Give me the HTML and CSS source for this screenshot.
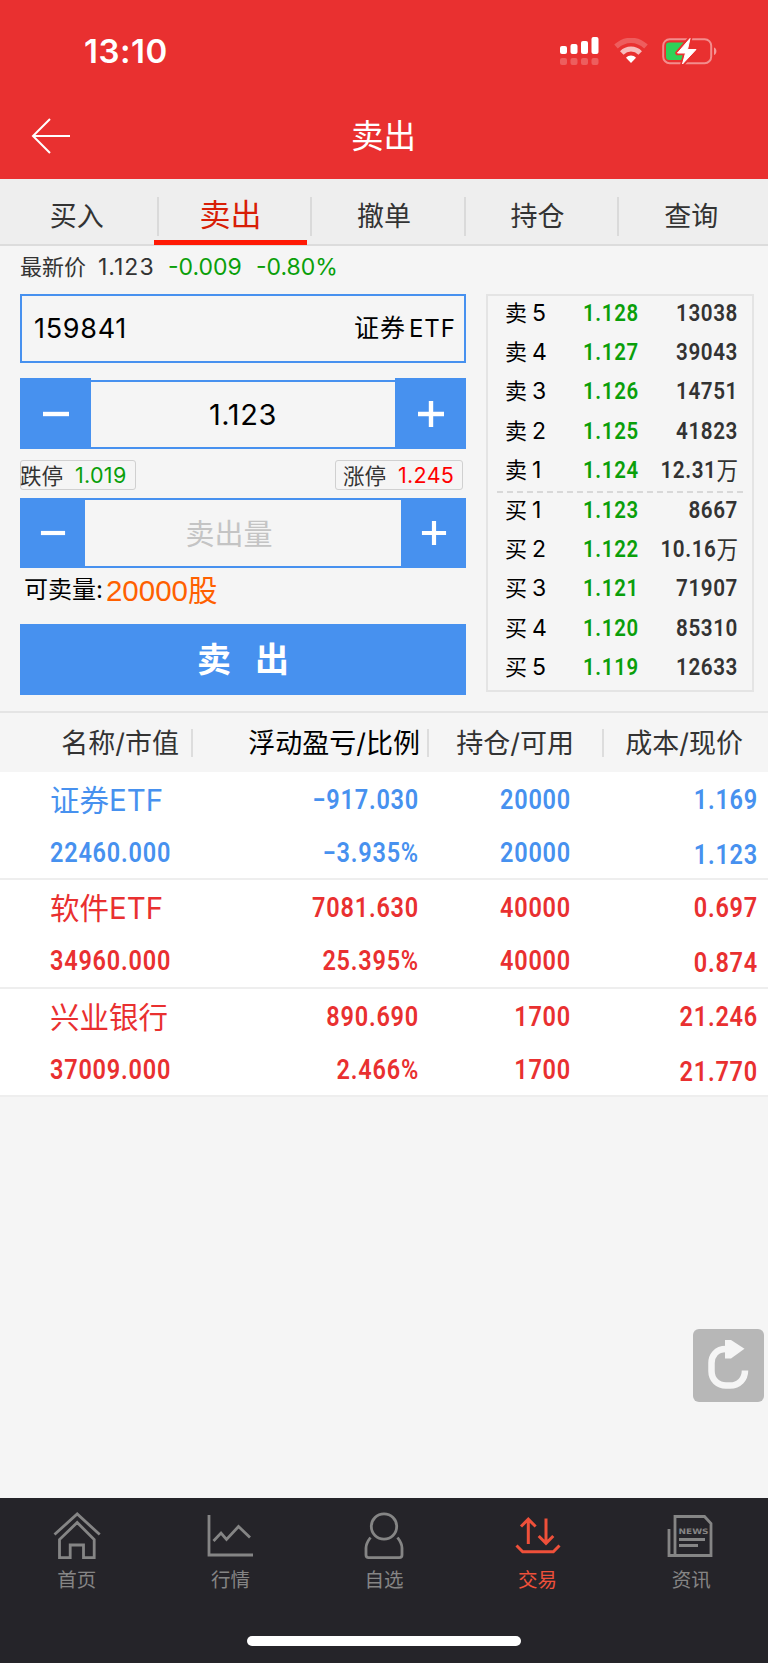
FILE: index.html
```html
<!DOCTYPE html>
<html lang="zh-CN">
<head>
    <meta charset="UTF-8">
    <meta name="viewport" content="width=device-width, initial-scale=1.0">
    <title>卖出</title>
    <link rel="stylesheet" href="styles.css">
</head>
<body>
    <div class="page">
        <div class="header">
            <div class="status">
                <span class="time">13:10</span>
                <div class="status-icons">
                    <svg class="signal" width="40" height="28" viewBox="0 0 40 28" fill="#fff">
                        <rect x="0" y="9" width="7" height="8" rx="2"/>
                        <rect x="10.5" y="7" width="7" height="10" rx="2"/>
                        <rect x="21" y="4" width="7" height="13" rx="2"/>
                        <rect x="31.5" y="0" width="7" height="17" rx="2"/>
                        <g opacity=".22">
                            <rect x="0" y="21" width="7" height="7" rx="2"/>
                            <rect x="10.5" y="21" width="7" height="7" rx="2"/>
                            <rect x="21" y="21" width="7" height="7" rx="2"/>
                            <rect x="31.5" y="21" width="7" height="7" rx="2"/>
                        </g>
                    </svg>
                    <svg class="wifi" width="34" height="26" viewBox="0 0 34 26" fill="none">
                        <path d="M2 8.5C11 .2 23 .2 32 8.5" stroke="#fff" stroke-width="5.2" opacity=".22"/>
                        <path d="M7.8 15c5.2-5.2 13.2-5.2 18.4 0" stroke="#fff" stroke-width="5" opacity=".68"/>
                        <path d="M17 25l-5-5.2c2.8-3 7.2-3 10 0z" fill="#fff"/>
                    </svg>
                    <svg class="battery" width="56" height="28" viewBox="0 0 56 28">
                        <rect x="1.2" y="2.2" width="48" height="24" rx="6.5" fill="none" stroke="#fff" stroke-width="2" opacity=".45"/>
                        <path d="M52 10.5c3.2 1 3.2 6.5 0 7.5z" fill="#fff" opacity=".5"/>
                        <path d="M7 5.5h15v17.5H7a3 3 0 0 1-3-3v-11.5a3 3 0 0 1 3-3z" fill="#30d158"/>
                        <path d="M28 1.5L15.5 16h8L20.5 27 34 12.5h-8.5z" fill="#fff" stroke="#e93030" stroke-width="4.5" stroke-linejoin="round"/>
                        <path d="M28 1.5L15.5 16h8L20.5 27 34 12.5h-8.5z" fill="#fff" stroke="#fff" stroke-width="1"/>
                    </svg>
                </div>
            </div>
            <div class="title-bar">
                <svg class="back" width="40" height="36" viewBox="0 0 40 36" fill="none" stroke="#fff" stroke-width="2">
                    <path d="M20 1L3 18l17 17M3 18h37"/>
                </svg>
                <h1>卖出</h1>
            </div>
        </div>

        <ul class="tabs">
            <li>买入</li>
            <li class="active">卖出</li>
            <li>撤单</li>
            <li>持仓</li>
            <li>查询</li>
        </ul>

        <div class="quote">
            <span class="quote-name">最新价</span>
            <span class="quote-price">1.123</span>
            <span class="quote-diff green">-0.009</span>
            <span class="quote-rate green">-0.80%</span>
        </div>

        <div class="trade">
            <div class="form">
                <div class="code-box">
                    <span class="code">159841</span>
                    <span class="stock"><span class="stock-cn">证券</span>ETF</span>
                </div>
                <div class="stepper price">
                    <div class="step-btn"><svg width="28" height="28" viewBox="0 0 28 28" stroke="#fff" stroke-width="4.4"><path d="M1 14h26"/></svg></div>
                    <div class="step-value">1.123</div>
                    <div class="step-btn"><svg width="28" height="28" viewBox="0 0 28 28" stroke="#fff" stroke-width="4.4"><path d="M1 14h26M14 1v26"/></svg></div>
                </div>
                <div class="limits">
                    <div class="limit down"><label>跌停</label><span class="green">1.019</span></div>
                    <div class="limit up"><label>涨停</label><span class="red">1.245</span></div>
                </div>
                <div class="stepper amount">
                    <div class="step-btn"><svg width="26" height="26" viewBox="0 0 28 28" stroke="#fff" stroke-width="4.5"><path d="M1 14h26"/></svg></div>
                    <div class="step-value placeholder">卖出量</div>
                    <div class="step-btn"><svg width="26" height="26" viewBox="0 0 28 28" stroke="#fff" stroke-width="4.5"><path d="M1 14h26M14 1v26"/></svg></div>
                </div>
                <div class="available">可卖量:<span>20000股</span></div>
                <div class="sell-btn">卖<i></i>出</div>
            </div>

            <div class="book">
                <ul>
                    <li><b>卖<em>5</em></b><span>1.128</span><strong>13038</strong></li>
                    <li><b>卖<em>4</em></b><span>1.127</span><strong>39043</strong></li>
                    <li><b>卖<em>3</em></b><span>1.126</span><strong>14751</strong></li>
                    <li><b>卖<em>2</em></b><span>1.125</span><strong>41823</strong></li>
                    <li><b>卖<em>1</em></b><span>1.124</span><strong>12.31<i>万</i></strong></li>
                </ul>
                <ul class="buy">
                    <li><b>买<em>1</em></b><span>1.123</span><strong>8667</strong></li>
                    <li><b>买<em>2</em></b><span>1.122</span><strong>10.16<i>万</i></strong></li>
                    <li><b>买<em>3</em></b><span>1.121</span><strong>71907</strong></li>
                    <li><b>买<em>4</em></b><span>1.120</span><strong>85310</strong></li>
                    <li><b>买<em>5</em></b><span>1.119</span><strong>12633</strong></li>
                </ul>
            </div>
        </div>

        <div class="holdings">
            <div class="holdings-head">
                <div>名称/市值</div>
                <div class="dark">浮动盈亏/比例</div>
                <div>持仓/可用</div>
                <div>成本/现价</div>
            </div>
            <div class="holding blue">
                <div><p class="name">证券ETF</p><p>22460.000</p></div>
                <div><p>−917.030</p><p>−3.935%</p></div>
                <div><p>20000</p><p>20000</p></div>
                <div><p>1.169</p><p>1.123</p></div>
            </div>
            <div class="holding">
                <div><p class="name">软件ETF</p><p>34960.000</p></div>
                <div><p>7081.630</p><p>25.395%</p></div>
                <div><p>40000</p><p>40000</p></div>
                <div><p>0.697</p><p>0.874</p></div>
            </div>
            <div class="holding">
                <div><p class="name">兴业银行</p><p>37009.000</p></div>
                <div><p>890.690</p><p>2.466%</p></div>
                <div><p>1700</p><p>1700</p></div>
                <div><p>21.246</p><p>21.770</p></div>
            </div>
        </div>

        <div class="refresh">
            <svg width="71" height="73" viewBox="0 0 71 73">
                <path d="M33 20C23 20 18.5 27 18.5 34v8C18.5 51 25 56.5 33 56.5h4C46 56.5 52 50 52 41.500" fill="none" stroke="#f5f5f5" stroke-width="6.5"/>
                <path d="M32 11h6l13.5 8.8L38 29.5h-6z" fill="#f5f5f5"/>
            </svg>
        </div>

        <div class="nav">
            <ul>
                <li>
                    <svg width="50" height="50" viewBox="0 0 50 50" fill="none" stroke="#858585" stroke-width="2.8">
                        <path d="M2.5 23.5L25.2 3l22.5 20.5"/>
                        <path d="M7.5 28.5v18.2h10.7V34h13.3v12.7h10.7V28.5l-17-17z"/>
                    </svg>
                    <span>首页</span>
                </li>
                <li>
                    <svg width="50" height="50" viewBox="0 0 50 50" fill="none" stroke="#858585" stroke-width="2.8">
                        <path d="M4 4v40h44"/>
                        <path d="M8.5 30l7.5-8 5.5 6.5L33.5 15.500l11.500 11"/>
                    </svg>
                    <span>行情</span>
                </li>
                <li>
                    <svg width="50" height="50" viewBox="0 0 50 50" fill="none" stroke="#858585" stroke-width="2.8">
                        <circle cx="25" cy="15.5" r="12.7"/>
                        <path d="M11.5 26.5C8 31 7 33 7 37v7q0 2.700 2.700 2.700h30.600q2.700 0 2.700-2.700v-7c0-4-1-6-4.500-10.500"/>
                    </svg>
                    <span>自选</span>
                </li>
                <li class="active">
                    <svg width="50" height="50" viewBox="1 0 50 50" fill="none" stroke="#ef503a" stroke-width="3">
                        <path d="M16.300 33V8.500M9 15.500l7.300-7.300 7.300 7.300"/>
                        <path d="M34 7.500V32M26.700 25l7.300 7.300 7.300-7.300"/>
                        <path d="M4.500 34.500l6.200 6.200h30.600l6.200-6.200"/>
                    </svg>
                    <span>交易</span>
                </li>
                <li>
                    <svg width="50" height="50" viewBox="1 0 50 50" fill="none" stroke="#858585" stroke-width="2.8">
                        <path d="M10 44.500V5.500H39.500l6.500 7v32H4V18"/>
                        <path d="M14 28.500h26M14 34.500h19"/>
                        <text x="13.500" y="22.500" font-family="DejaVu Sans" font-weight="bold" font-size="7.5" textLength="30" lengthAdjust="spacingAndGlyphs" fill="#858585" stroke="none">NEWS</text>
                    </svg>
                    <span>资讯</span>
                </li>
            </ul>
            <div class="home-bar"></div>
        </div>
    </div>
</body>
</html>
```
FILE: styles.css
```css
*{
    padding: 0;
    margin: 0;
    box-sizing: border-box;
}
li{
    list-style: none;
}
i,em{
    font-style: normal;
}
body{
    background-color: #f5f5f5;
    font-family: Inter, "Noto Sans CJK SC", sans-serif;
    color: #333;
}
.page{
    width: 768px;
    height: 1663px;
    display: flex;
    flex-direction: column;
    position: relative;
    overflow: hidden;
    white-space: nowrap;
}
.green{
    color: #0a9f0a;
}
.red{
    color: #f00;
}

/* 顶部 */
.header{
    height: 179px;
    background-color: #e93030;
    color: #fff;
}
.status{
    height: 94px;
    padding: 8px 50px 0 84px;
    display: flex;
    justify-content: space-between;
    align-items: center;
}
.time{
    font-size: 33px;
    font-weight: 600;
    letter-spacing: 0.5px;
}
.status-icons{
    display: flex;
    align-items: center;
}
.wifi{
    margin: 0 14px 0 14px;
}
.title-bar{
    height: 84px;
    padding: 0 30px;
    display: flex;
    align-items: center;
}
.title-bar h1{
    flex: 1;
    padding: 0 41px 5px 0;
    text-align: center;
    font-size: 32.5px;
    font-weight: 400;
}

/* 菜单 */
.tabs{
    height: 67px;
    display: flex;
    background-color: #eee;
    border-bottom: 2px solid #dcdcdc;
}
.tabs li{
    flex: 1;
    height: 66px;
    line-height: 75px;
    text-align: center;
    font-size: 27px;
    position: relative;
}
.tabs li+li::before{
    content: "";
    position: absolute;
    left: 3px;
    top: 18px;
    width: 2px;
    height: 39px;
    background-color: #dadada;
}
.tabs .active{
    color: #d81e06;
    font-size: 31px;
    line-height: 72px;
    border-bottom: 5px solid #ff1a05;
}
.quote{
    height: 48px;
    padding: 0 0 7px 20px;
    display: flex;
    align-items: center;
    font-size: 23px;
}
.quote-name{
    width: 78px;
    padding-bottom: 4px;
    font-size: 22px;
}
.quote-price{
    width: 70px;
    letter-spacing: 1px;
}
.quote-diff{
    width: 88px;
}

/* 下单 */
.trade{
    height: 417px;
    padding: 0 14px 0 20px;
    display: flex;
    justify-content: space-between;
    align-items: flex-start;
}
.form{
    width: 446px;
    color: #000;
}
.code-box{
    height: 69px;
    padding: 0 8px 0 12px;
    display: flex;
    justify-content: space-between;
    align-items: center;
    border: 2px solid #4791ef;
}
.code{
    font-size: 27px;
    letter-spacing: 0.7px;
}
.stock{
    padding-bottom: 5px;
    font-size: 24px;
    letter-spacing: 1px;
}
.stock-cn{
    font-size: 25px;
    margin-right: 3px;
}
.stepper{
    display: flex;
    justify-content: space-between;
}
.step-btn{
    background-color: #4791ef;
    display: flex;
    justify-content: center;
    align-items: center;
}
.step-value{
    flex: 1;
    display: flex;
    justify-content: center;
    align-items: center;
    font-size: 29px;
    letter-spacing: 0.6px;
    border-top: 2px solid #4791ef;
    border-bottom: 2px solid #4791ef;
}
.price{
    height: 71px;
    margin-top: 15px;
}
.price .step-btn{
    width: 71px;
}
.price .step-value{
    margin-top: 2px;
}
.limits{
    height: 30px;
    margin: 11px 3px 8px 0;
    display: flex;
    justify-content: space-between;
}
.limit{
    display: flex;
    align-items: center;
    border: 1px solid #d0d0d0;
    border-radius: 3px;
    font-size: 21.5px;
    color: #333;
}
.limit label{
    padding-bottom: 2px;
    margin-left: -1px;
}
.limit span{
    margin-left: 12px;
    letter-spacing: 0.3px;
}
.down{
    width: 116px;
}
.up{
    width: 128px;
    padding-left: 8px;
}
.amount{
    height: 70px;
}
.amount .step-btn{
    width: 65px;
}
.amount .placeholder{
    padding: 0 28px 3px 0;
    letter-spacing: 0;
    color: #c4c4c4;
}
.available{
    height: 44px;
    padding: 0 0 5px 4px;
    display: flex;
    align-items: center;
    font-size: 24px;
}
.available span{
    margin-left: 3px;
    font-family: "Liberation Sans", "Noto Sans CJK SC", sans-serif;
    font-size: 29.5px;
    color: #ff6000;
}
.sell-btn{
    height: 71px;
    margin-top: 12px;
    line-height: 71px;
    text-align: center;
    background-color: #4791ef;
    color: #fff;
    font-size: 34px;
    font-weight: 700;
}
.sell-btn i{
    display: inline-block;
    width: 24px;
}

/* 五档 */
.book{
    width: 268px;
    height: 398px;
    padding: 0 9px;
    border: 2px solid #e4e4e4;
}
.book ul{
    height: 197px;
}
.book li{
    height: 39.4px;
    padding: 0 5px 0 8px;
    display: flex;
    align-items: center;
    font-family: Roboto, "Noto Sans CJK SC", sans-serif;
    font-size: 24px;
    font-weight: 600;
    position: relative;
    top: -3px;
}
.book b{
    width: 78px;
    height: 38px;
    line-height: 38px;
    font-family: Inter, "Noto Sans CJK SC", sans-serif;
    font-size: 22px;
    font-weight: 400;
    color: #000;
}
.book em{
    margin-left: 5px;
    font-size: 23px;
}
/* 数字压窄 */
.book span{
    width: 54px;
    color: #0a9f0a;
    letter-spacing: 0.8px;
    transform: scaleX(0.85);
    transform-origin: left;
}
.book strong{
    flex: 1;
    display: flex;
    justify-content: flex-end;
    align-items: center;
    height: 38px;
    font-weight: 600;
    letter-spacing: 0.7px;
    transform: scaleX(0.86);
    transform-origin: right;
}
.book strong i{
    padding-bottom: 3px;
    font-size: 25px;
    font-weight: 400;
    letter-spacing: 0;
}
.buy{
    border-top: 2px dashed #d8d8d8;
}
.book ul:first-child{
    height: 195px;
}

/* 持仓 */
.holdings-head{
    height: 61px;
    display: flex;
    align-items: center;
    border-top: 2px solid #e4e4e4;
    font-size: 27px;
}
.holdings-head div{
    height: 28px;
    line-height: 29px;
    border-right: 2px solid #ddd;
    text-align: right;
}
.holdings-head div:nth-child(1){
    width: 193px;
    padding-right: 12px;
}
.holdings-head div:nth-child(2){
    width: 236px;
    padding-right: 7px;
}
.holdings-head div:nth-child(3){
    width: 175px;
    padding-right: 28px;
}
.holdings-head div:nth-child(4){
    width: 139px;
    border: 0;
}
.holdings-head .dark{
    color: #000;
}
.holding{
    height: 108.3px;
    display: flex;
    background-color: #fff;
    border-bottom: 2px solid #eee;
    font-family: Roboto, "Noto Sans CJK SC", sans-serif;
    font-size: 27px;
    font-weight: 600;
    letter-spacing: 0.9px;
    color: #e93030;
    text-align: right;
}
.blue{
    color: #4791ef;
}
.holding p{
    height: 53px;
    line-height: 56px;
    transform: scaleX(0.87);
    transform-origin: right;
}
.holding div:nth-child(1){
    width: 199px;
    padding-left: 50px;
    text-align: left;
}
.holding div:nth-child(1) p{
    transform-origin: left;
}
.holding div:nth-child(2){
    width: 220px;
}
.holding div:nth-child(3){
    width: 152px;
}
.holding div:nth-child(4){
    width: 187px;
}
.holding div:nth-child(4) p+p{
    line-height: 60px;
}
.holding .name{
    font-family: Inter, "Noto Sans CJK SC", sans-serif;
    font-size: 29.5px;
    font-weight: 400;
    letter-spacing: 0;
    transform: none;
}

.refresh{
    position: absolute;
    left: 693px;
    top: 1329px;
    width: 71px;
    height: 73px;
    border-radius: 6px;
    background-color: #b7b7b7;
}

/* 底部导航 */
.nav{
    height: 165px;
    margin-top: auto;
    padding-top: 13px;
    background-color: #252429;
    color: #858585;
}
.nav ul{
    display: flex;
    height: 125px;
}
.nav li{
    flex: 1;
    display: flex;
    flex-direction: column;
    align-items: center;
}
.nav span{
    margin-top: 5px;
    font-size: 19.5px;
    line-height: 28px;
}
.nav .active{
    color: #ef503a;
}
.home-bar{
    width: 274px;
    height: 10px;
    margin: 0 auto;
    border-radius: 5px;
    background-color: #fff;
}
```
